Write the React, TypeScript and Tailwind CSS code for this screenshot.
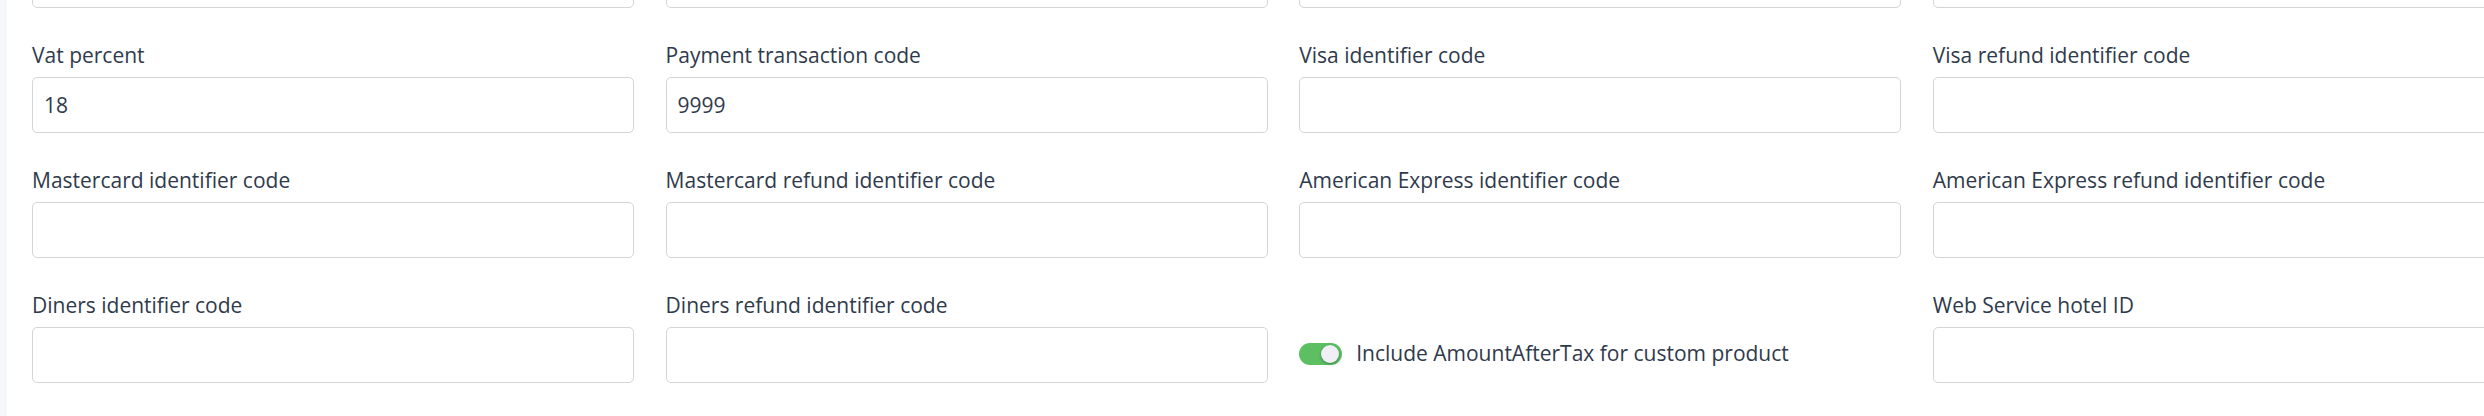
const rows: (string | null)[][] = [
    ['Vat percent', 'Payment transaction code', 'Visa identifier code', 'Visa refund identifier code'],
    ['Mastercard identifier code', 'Mastercard refund identifier code', 'American Express identifier code', 'American Express refund identifier code'],
    ['Diners identifier code', 'Diners refund identifier code', null, 'Web Service hotel ID'],
];

const values: Record<string, string> = {
    'Vat percent': '18',
    'Payment transaction code': '9999',
};

function Field({ label }: { label: string }) {
    return (
        <div className="flex flex-col">
            <label className="h-[28px] leading-[28px] text-[21px] text-[#2f3a4c] mb-[8px] whitespace-nowrap">{label}</label>
            <input
                type="text"
                defaultValue={values[label] ?? ''}
                className="h-[56px] w-full rounded-[5px] border border-[#d3d5d9] bg-white px-[11px] text-[21px] text-[#2f3a4c] outline-none"
            />
        </div>
    );
}

function Toggle() {
    return (
        <div className="flex flex-col">
            <div className="h-[28px] mb-[8px]"></div>
            <div className="h-[56px] flex items-center gap-[14px] -mt-[1px]">
                <button className="relative h-[22px] w-[43px] rounded-full bg-[#5cc063]">
                    <span className="absolute right-[3px] top-[2px] h-[18px] w-[18px] rounded-full bg-[#efeff5] shadow-[0_1px_3px_rgba(0,0,0,0.35)]"></span>
                </button>
                <span className="text-[21px] text-[#2f3a4c] whitespace-nowrap">Include AmountAfterTax for custom product</span>
            </div>
        </div>
    );
}

export default function App() {
    return (
        <main className="flex w-full h-[416px] overflow-hidden bg-white font-['Open_Sans',sans-serif]">
            <div className="w-[7px] shrink-0 bg-[#f6f7f9]"></div>
            <div className="pl-[25px] -mt-[48px]">
                <div className="grid grid-cols-[repeat(4,602px)] gap-x-[31.6px] gap-y-[33px]">
                    {[0, 1, 2, 3].map((i) => (
                        <div key={i} className="h-[56px] rounded-[5px] border border-[#d3d5d9] bg-white"></div>
                    ))}
                    {rows.flat().map((label, i) =>
                        label ? <Field key={i} label={label} /> : <Toggle key={i} />
                    )}
                </div>
            </div>
        </main>
    );
}
